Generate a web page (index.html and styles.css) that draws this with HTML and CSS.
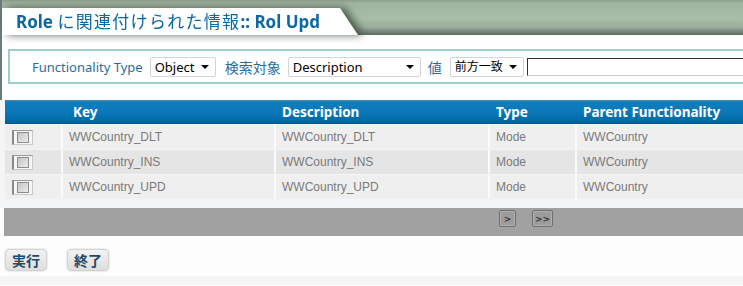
FILE: index.html
```html
<!DOCTYPE html>
<html lang="ja">
<head>
    <meta charset="UTF-8">
    <title>Role に関連付けられた情報</title>
    <link rel="stylesheet" href="styles.css">
</head>
<body>

    <div class="top">
        <div class="band">
            <div class="tab-shadow">
                <div class="tab">
                    <h1 class="title">Role <span class="title-jp">に関連付けられた情報</span>:: Rol Upd</h1>
                </div>
            </div>
        </div>

        <div class="filter-area">
            <div class="filter">
                <span class="label">Functionality Type</span>
                <div class="select sel-type">Object<span class="arrow"></span></div>
                <span class="label label-jp">検索対象</span>
                <div class="select sel-field">Description<span class="arrow"></span></div>
                <span class="label label-jp">値</span>
                <div class="select sel-op">前方一致<span class="arrow"></span></div>
                <div class="text-input"></div>
            </div>
        </div>
    </div>

    <div class="grid">
        <div class="row head">
            <div class="cell"></div>
            <div class="cell key-head">Key</div>
            <div class="cell">Description</div>
            <div class="cell">Type</div>
            <div class="cell">Parent Functionality</div>
        </div>
        <div class="row">
            <div class="cell"><span class="chk"></span></div>
            <div class="cell">WWCountry_DLT</div>
            <div class="cell">WWCountry_DLT</div>
            <div class="cell">Mode</div>
            <div class="cell">WWCountry</div>
        </div>
        <div class="row alt">
            <div class="cell"><span class="chk"></span></div>
            <div class="cell">WWCountry_INS</div>
            <div class="cell">WWCountry_INS</div>
            <div class="cell">Mode</div>
            <div class="cell">WWCountry</div>
        </div>
        <div class="row">
            <div class="cell"><span class="chk"></span></div>
            <div class="cell">WWCountry_UPD</div>
            <div class="cell">WWCountry_UPD</div>
            <div class="cell">Mode</div>
            <div class="cell">WWCountry</div>
        </div>
    </div>

    <div class="pager">
        <button class="page-btn">&gt;</button>
        <button class="page-btn">&gt;&gt;</button>
    </div>

    <div class="actions">
        <button class="action-btn">実行</button>
        <button class="action-btn">終了</button>
    </div>

    <div class="footer"></div>

</body>
</html>
```

FILE: styles.css
```css
body {
    margin: 0;
    background: #fdfdfd;
    font-family: 'Noto Sans', 'Noto Sans CJK JP', sans-serif;
    overflow: hidden;
}

.top {
    border-left: 2px solid #6b7a80;
}

/* zielono-szary pasek z zakładką */
.band {
    height: 35px;
    padding-top: 8px;
    box-sizing: border-box;
    background: linear-gradient(#8c9c8c 0, #a0b4a0 3px, #a7bea7 18px, #9cb09c 27px, #74827a 32px, #5e6a60 35px);
}

.tab-shadow {
    width: 356px;
    height: 27px;
    filter: drop-shadow(5px 0 4px rgba(40, 52, 40, 0.75));
}

.tab {
    height: 27px;
    background: #fff;
    clip-path: polygon(0 0, 338px 0, 356px 100%, 0 100%);
}

.title {
    margin: 0;
    padding-left: 14px;
    line-height: 27px;
    font-size: 17px;
    font-weight: bold;
    color: #0b68a3;
    white-space: nowrap;
}

.title-jp {
    font-weight: normal;
    letter-spacing: 1.3px;
}

.filter-area {
    background: #fff;
    padding: 14px 0 16px 6px;
}

.filter {
    display: flex;
    align-items: center;
    gap: 7px;
    height: 31px;
    padding-left: 22px;
    border: 2px solid #9dcfca;
    border-right: none;
}

.label {
    font-size: 13px;
    color: #2a6d9c;
    white-space: nowrap;
}

.label-jp {
    font-size: 14px;
}

.select {
    position: relative;
    height: 20px;
    box-sizing: border-box;
    border: 1px solid #d4d4d4;
    border-radius: 2px;
    background: #fff;
    padding-left: 4px;
    font-size: 13px;
    line-height: 18px;
    color: #000;
    white-space: nowrap;
}

.sel-type {
    width: 66px;
    margin-right: 2px;
}

.sel-field {
    width: 133px;
}

.sel-op {
    width: 74px;
    font-size: 12px;
    margin-left: 1px;
    margin-right: -4px;
}

.arrow {
    position: absolute;
    right: 6px;
    top: 7px;
    border-left: 4px solid transparent;
    border-right: 4px solid transparent;
    border-top: 4px solid #000;
}

.text-input {
    flex: 1;
    height: 18px;
    box-sizing: border-box;
    border-top: 1px solid #333;
    border-left: 1px solid #333;
    border-bottom: 1px solid #ccc;
    background: #fff;
}

/* tabela */
.grid {
    background: #f4f5f7;
    padding: 0 0 10px 5px;
}

.row {
    display: grid;
    grid-template-columns: 56px 211px 212px 85px 1fr;
    column-gap: 2px;
    height: 23px;
    margin-top: 2px;
    background: #fafafa;
}

.row .cell {
    background: #efefef;
    padding-left: 6px;
    font-family: 'Liberation Sans', Arial, sans-serif;
    font-size: 12px;
    line-height: 23px;
    color: #7a7a7a;
    white-space: nowrap;
    display: flex;
    align-items: center;
    padding-top: 1px;
    box-sizing: border-box;
}

.row.alt .cell {
    background: #e5e5e5;
}

.row.head {
    height: 24px;
    margin-top: 0;
    margin-bottom: -1px;
    background: linear-gradient(#4a8dbb 0, #107cbc 2px, #0b7aba 45%, #026aa8 85%, #005990 100%);
}

.row.head .cell {
    background: transparent;
    padding-top: 0;
    font-family: 'Noto Sans', sans-serif;
    font-size: 13.5px;
    font-weight: bold;
    color: #fff;
}

.row.head .key-head {
    padding-left: 10px;
}

.chk {
    position: relative;
    width: 21px;
    height: 15px;
    margin-left: 1px;
    box-sizing: border-box;
    border-left: 2px solid #8a8a8a;
    border-top: 1px solid #9a9a9a;
    border-right: 1px solid #c8c8c8;
    border-bottom: 1px solid #c8c8c8;
    background: #f6f6f6;
}

.chk::after {
    content: '';
    position: absolute;
    left: 3px;
    top: 1px;
    width: 10px;
    height: 9px;
    border: 1px solid #8c8c8c;
    background: linear-gradient(135deg, #c4c4c4, #ececec);
}

.pager {
    margin-left: 4px;
    height: 28px;
    background: #a1a1a1;
    display: flex;
    align-items: flex-start;
    gap: 16px;
    padding: 2px 0 0 495px;
    box-sizing: border-box;
}

.page-btn {
    height: 17px;
    min-width: 17px;
    padding: 0 2px;
    border: 1px solid #6e6e6e;
    border-radius: 2px;
    background: #9c9c9c;
    box-shadow: inset 0 0 0 1px #b0b0b0;
    font-family: 'DejaVu Sans', sans-serif;
    font-size: 9px;
    font-weight: bold;
    color: #333;
    line-height: 14px;
}

.page-btn + .page-btn {
    min-width: 20px;
}

.actions {
    height: 40px;
    box-sizing: border-box;
    padding: 13px 0 0 5px;
    display: flex;
    align-items: flex-start;
    gap: 20px;
    background: #fdfdfd;
}

.action-btn {
    width: 42px;
    height: 22px;
    padding: 0;
    border: 1px solid #d2d2d2;
    border-radius: 4px;
    background: linear-gradient(#f2f2f2, #dedede);
    box-shadow: 0 0 1px 1px #ececec;
    font-family: 'Noto Sans CJK JP', sans-serif;
    font-size: 14px;
    font-weight: bold;
    color: #1e4a6a;
    line-height: 20px;
}

.footer {
    height: 9px;
    background: #f4f5f7;
}
```
